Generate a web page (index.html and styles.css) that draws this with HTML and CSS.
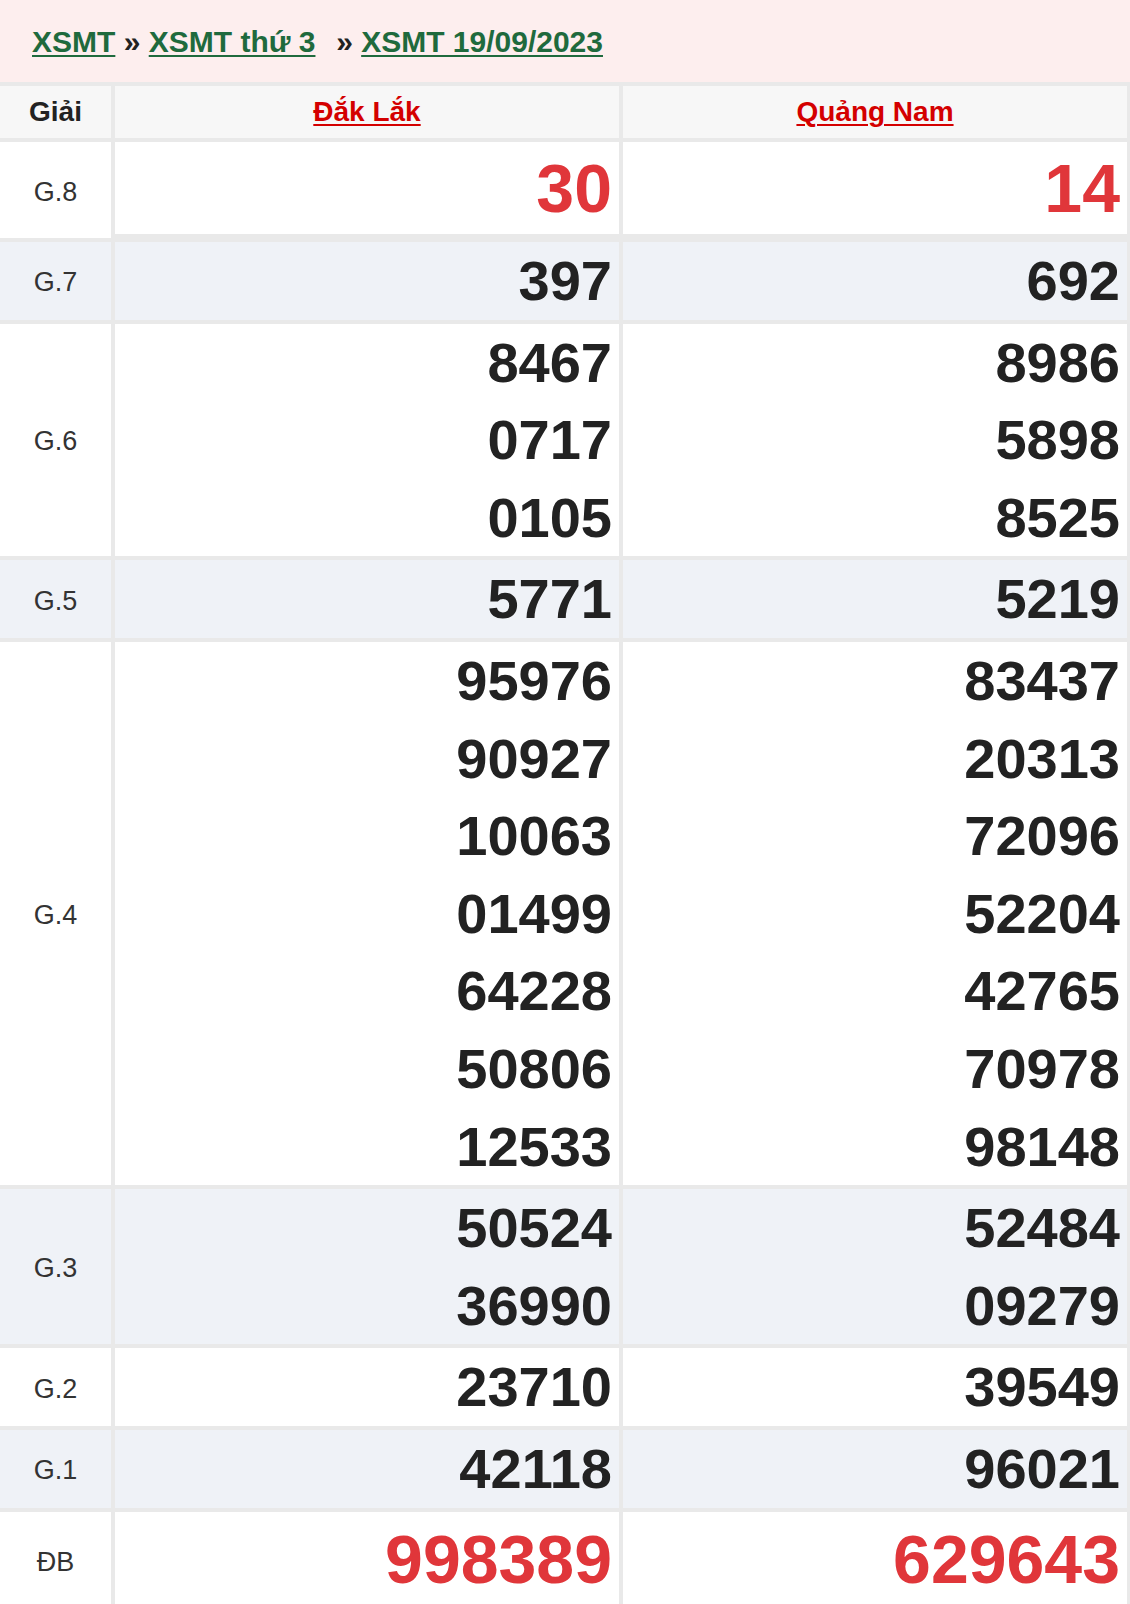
FILE: index.html
```html
<!DOCTYPE html>
<html lang="vi">
<head>
<meta charset="utf-8">
<title>XSMT 19/09/2023</title>
<link rel="stylesheet" href="styles.css">
</head>
<body>
<div class="crumbs"><a href="#">XSMT</a> <span class="sep">»</span> <a href="#">XSMT thứ 3</a>&nbsp;&nbsp;<span class="sep sep-wide">»</span> <a href="#">XSMT 19/09/2023</a></div>
<div class="results">
  <div class="hd label-hd">Giải</div>
  <div class="hd"><a href="#">Đắk Lắk</a></div>
  <div class="hd"><a href="#">Quảng Nam</a></div>

  <div class="label top-row">G.8</div>
  <div class="nums top-row"><div class="n red">30</div></div>
  <div class="nums top-row"><div class="n red">14</div></div>

  <div class="label alt">G.7</div>
  <div class="nums alt"><div class="n">397</div></div>
  <div class="nums alt"><div class="n">692</div></div>

  <div class="label">G.6</div>
  <div class="nums"><div class="n">8467</div><div class="n">0717</div><div class="n">0105</div></div>
  <div class="nums"><div class="n">8986</div><div class="n">5898</div><div class="n">8525</div></div>

  <div class="label alt">G.5</div>
  <div class="nums alt"><div class="n">5771</div></div>
  <div class="nums alt"><div class="n">5219</div></div>

  <div class="label">G.4</div>
  <div class="nums"><div class="n">95976</div><div class="n">90927</div><div class="n">10063</div><div class="n">01499</div><div class="n">64228</div><div class="n">50806</div><div class="n">12533</div></div>
  <div class="nums"><div class="n">83437</div><div class="n">20313</div><div class="n">72096</div><div class="n">52204</div><div class="n">42765</div><div class="n">70978</div><div class="n">98148</div></div>

  <div class="label alt">G.3</div>
  <div class="nums alt"><div class="n">50524</div><div class="n">36990</div></div>
  <div class="nums alt"><div class="n">52484</div><div class="n">09279</div></div>

  <div class="label">G.2</div>
  <div class="nums"><div class="n">23710</div></div>
  <div class="nums"><div class="n">39549</div></div>

  <div class="label alt">G.1</div>
  <div class="nums alt"><div class="n">42118</div></div>
  <div class="nums alt"><div class="n">96021</div></div>

  <div class="label db-row">ĐB</div>
  <div class="nums db-row"><div class="n red">998389</div></div>
  <div class="nums db-row"><div class="n red">629643</div></div>
</div>
</body>
</html>
```
FILE: styles.css
```css
html, body {
  margin: 0;
  padding: 0;
  background: #ffffff;
}
body {
  font-family: "Liberation Sans", Arial, sans-serif;
  color: #222;
}
.crumbs {
  background: #fdeeee;
  height: 82px;
  box-sizing: border-box;
  padding: 0 0 0 32px;
  line-height: 84px;
  font-size: 30px;
  font-weight: bold;
  color: #222;
  white-space: nowrap;
}
.crumbs a {
  color: #1f6a3d;
  text-decoration: underline;
  text-decoration-thickness: 2px;
  text-underline-offset: 3px;
}
.crumbs .sep {
  color: #222;
}
.crumbs .sep-wide {
  margin-left: 4px;
}
.results {
  display: grid;
  grid-template-columns: 111px 1fr 1fr;
  gap: 4px;
  background: #e9e9e9;
  padding: 4px 3px 2px 0;
}
.hd {
  background: #f7f7f7;
  height: 52px;
  display: flex;
  align-items: center;
  justify-content: center;
  font-size: 28px;
  font-weight: bold;
  color: #222;
}
.hd a {
  color: #d40000;
  text-decoration: underline;
  text-decoration-thickness: 2px;
  text-underline-offset: 3px;
}
.label {
  background: #fff;
  display: flex;
  align-items: center;
  justify-content: center;
  font-size: 27px;
  color: #333;
  padding-top: 4px;
}
.nums {
  background: #fff;
  display: flex;
  flex-direction: column;
  justify-content: center;
  text-align: right;
  padding-right: 7px;
}
.alt {
  background: #eff2f7;
}
.n {
  font-size: 56px;
  font-weight: bold;
  line-height: 77.6px;
  color: #222;
}
.top-row {
  height: 92px;
}
.db-row {
  height: 94px;
}
.n.red {
  font-size: 68px;
  color: #e0363a;
  line-height: 90px;
}
```
